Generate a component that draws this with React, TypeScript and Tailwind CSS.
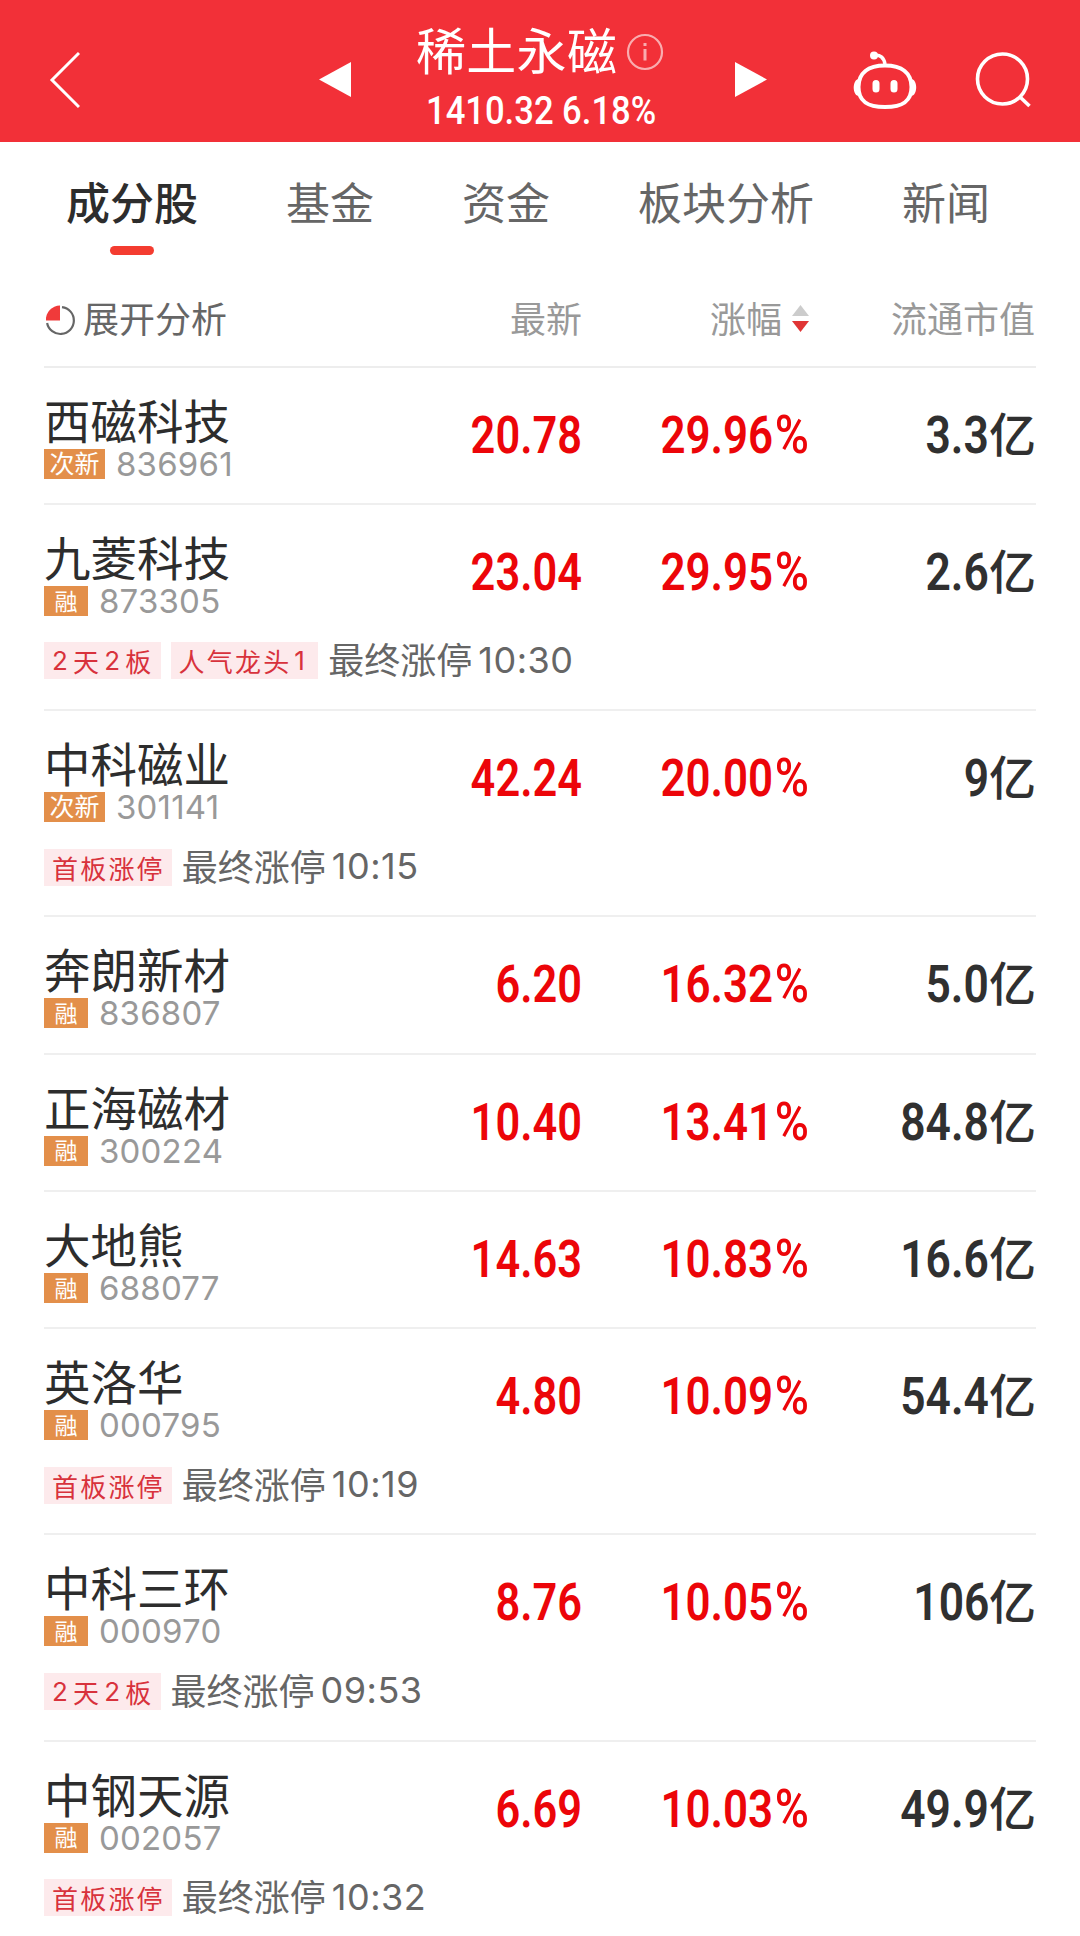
type Stock = {
  name: string;
  code: string;
  badge: string;
  price: string;
  change: string;
  cap: string;
  tags?: string[];
  time?: string;
};

const tabs = ["成分股", "基金", "资金", "板块分析", "新闻"];

const stocks: Stock[] = [
  { name: "西磁科技", code: "836961", badge: "次新", price: "20.78", change: "29.96", cap: "3.3" },
  { name: "九菱科技", code: "873305", badge: "融", price: "23.04", change: "29.95", cap: "2.6", tags: ["2天2板", "人气龙头1"], time: "10:30" },
  { name: "中科磁业", code: "301141", badge: "次新", price: "42.24", change: "20.00", cap: "9", tags: ["首板涨停"], time: "10:15" },
  { name: "奔朗新材", code: "836807", badge: "融", price: "6.20", change: "16.32", cap: "5.0" },
  { name: "正海磁材", code: "300224", badge: "融", price: "10.40", change: "13.41", cap: "84.8" },
  { name: "大地熊", code: "688077", badge: "融", price: "14.63", change: "10.83", cap: "16.6" },
  { name: "英洛华", code: "000795", badge: "融", price: "4.80", change: "10.09", cap: "54.4", tags: ["首板涨停"], time: "10:19" },
  { name: "中科三环", code: "000970", badge: "融", price: "8.76", change: "10.05", cap: "106", tags: ["2天2板"], time: "09:53" },
  { name: "中钢天源", code: "002057", badge: "融", price: "6.69", change: "10.03", cap: "49.9", tags: ["首板涨停"], time: "10:32" }
];

function RobotIcon() {
  return (
    <svg className="h-[60px] w-[66px]" viewBox="0 0 66 60" fill="none" stroke="#fff" strokeWidth="4">
      <path d="M33 15.500C50 15.500 59.500 23 59.500 37S51 57 33 57 6.500 51 6.500 37 16 15.500 33 15.500Z" />
      <path d="M22 5.500C28 4 32 8 33 14" strokeWidth="3.500" />
      <circle cx="22" cy="5.500" r="4" fill="#fff" stroke="none" />
      <path d="M7 29C0 29 0 46 7 46ZM59 29C66 29 66 46 59 46Z" fill="#fff" stroke="none" />
      <path d="M24 33.500V39M42 33.500V39" strokeWidth="7" strokeLinecap="round" />
    </svg>
  );
}

function Header() {
  return (
    <header className="flex h-[142px] items-center bg-[#f23038] text-white">
      <svg className="ml-[48px] mt-[18px] h-[58px] w-[32px]" viewBox="0 0 32 58" fill="none" stroke="#fff" strokeWidth="3">
        <path d="M31 2L4 29L31 56" />
      </svg>
      <svg className="ml-[238px] mt-[17px] h-[36px] w-[34px]" viewBox="0 0 34 36" fill="#fff">
        <path d="M33 0V35L1 17.500Z" />
      </svg>
      <div className="ml-[64px] flex h-full w-[250px] flex-col pt-[16px]">
        <div className="flex items-center">
          <h1 className="w-[204px] whitespace-nowrap text-[50px] font-normal leading-[64px] tracking-[0.3px]">稀土永磁</h1>
          <svg className="ml-[6px] mt-[7px] h-[38px] w-[38px] shrink-0 opacity-60" viewBox="0 0 38 38" fill="none" stroke="#fff" strokeWidth="2.200">
            <circle cx="19" cy="19" r="17" />
            <path d="M19 16V27.500M19 10V13" strokeWidth="3" />
          </svg>
        </div>
        <p className="ml-[10px] mt-[9px] origin-left scale-x-[0.910] whitespace-nowrap font-['Roboto'] text-[38px] font-medium leading-[44px]">
          1410.32 6.18%
        </p>
      </div>
      <svg className="ml-[68px] mt-[17px] h-[36px] w-[34px]" viewBox="0 0 34 36" fill="#fff">
        <path d="M1 0V35L33 17.500Z" />
      </svg>
      <div className="ml-[84px] mt-[18px]">
        <RobotIcon />
      </div>
      <svg className="ml-[57px] mt-[18px] h-[58px] w-[58px]" viewBox="0 0 58 58" fill="none" stroke="#fff" strokeWidth="3.600">
        <circle cx="27.500" cy="28" r="25" />
        <path d="M45 46L54.500 55" />
      </svg>
    </header>
  );
}

function Tabs() {
  return (
    <nav className="flex h-[127px] gap-[88px] pl-[66px] pt-[27px] text-[44px] leading-[64px] text-[#666]">
      {tabs.map((tab, i) => (
        <div key={tab} className="flex flex-col items-center whitespace-nowrap">
          <span className={i === 0 ? "font-medium text-[#2d2d2d]" : ""}>{tab}</span>
          {i === 0 && <span className="mt-[13px] h-[9px] w-[44px] rounded-full bg-[#f43c30]" />}
        </div>
      ))}
    </nav>
  );
}

function TableHead() {
  return (
    <div className="mx-[44px] grid h-[98.600px] grid-cols-[311px_227px_227px_227px] items-center border-b-2 border-[#ededed] text-right text-[36px] leading-[48px] text-[#999]">
      <div className="flex items-center text-[#666]">
        <svg className="mt-[5px] h-[32px] w-[32px]" viewBox="0 0 32 32" fill="none">
          <path d="M18 3.100A13.500 13.500 0 1 1 3.100 19" stroke="#666" strokeWidth="2.200" />
          <path d="M16 1.500V16.500H2A14 14 0 0 1 16 1.500Z" fill="#f03a3a" />
        </svg>
        <span className="ml-[7px]">展开分析</span>
      </div>
      <div>最新</div>
      <div className="flex items-center justify-end">
        <span>涨幅</span>
        <svg className="ml-[10px] mt-[3px] h-[28px] w-[17px]" viewBox="0 0 17 28">
          <path d="M8.500 0L17 11H0Z" fill="#ccc" />
          <path d="M0 16H17L8.500 27Z" fill="#e03535" />
        </svg>
      </div>
      <div className="pr-px">流通市值</div>
    </div>
  );
}

function Tag({ text }: { text: string }) {
  return (
    <span className="mr-[10px] mt-px flex h-[37px] items-center bg-[#fdeaec] pl-[8px] pr-[7px] text-[26px] tracking-[2.200px] text-[#d8323c]">
      {text.split(/(\d)/).filter(Boolean).map((part, i) => (
        <span key={i} className={/\d/.test(part) ? "mr-[3px] font-['Inter'] last:mr-0 last:w-[17px]" : "mr-[3px] last:mr-0"}>
          {part}
        </span>
      ))}
    </span>
  );
}

function StockRow({ stock }: { stock: Stock }) {
  return (
    <li className={`border-b-2 border-[#efefef] ${stock.tags ? "h-[206.100px]" : "h-[137.400px]"}`}>
      <div className="grid h-[136px] grid-cols-[311px_227px_227px_227px] items-center text-right">
        <div className="text-left">
          <div className="-mt-[2px] mb-[2px] text-[46.500px] leading-[56px] text-[#2d2d2d]">{stock.name}</div>
          <div className="flex h-[30px] items-center">
            <span className={`flex h-[30px] items-center justify-center bg-[#e38f4a] pb-[2px] text-white ${stock.badge.length > 1 ? "w-[61px] text-[25px]" : "w-[44px] text-[23px]"}`}>
              {stock.badge}
            </span>
            <span className="ml-[11px] font-['Inter'] text-[33px] leading-[30px] tracking-[0.200px] text-[#999]">{stock.code}</span>
          </div>
        </div>
        <div className="origin-right scale-x-[0.850] font-['Roboto'] text-[51px] font-semibold leading-[60px] text-[#ec0509]">{stock.price}</div>
        <div className="-mt-px origin-right scale-x-[0.860] font-['Roboto'] text-[51px] font-semibold leading-[60px] text-[#ec0509]">
          {stock.change}
          <span className="ml-[2px] text-[54px] font-medium">%</span>
        </div>
        <div className="flex items-center justify-end text-[#303030]">
          <span className="origin-right scale-x-[0.870] font-['Roboto'] text-[51px] font-semibold leading-[60px]">{stock.cap}</span>
          <span className="mb-[8px] text-[47px] font-medium leading-[60px]">亿</span>
        </div>
      </div>
      {stock.tags && (
        <div className="mt-px flex h-[37px] items-center whitespace-nowrap">
          {stock.tags.map((tag) => (
            <Tag key={tag} text={tag} />
          ))}
          <span className="-mt-[3px] text-[36px] leading-[37px] text-[#666]">最终涨停</span>
          <span className="ml-[6px] font-['Inter'] text-[36px] leading-[37px] tracking-[0.500px] text-[#666]">{stock.time}</span>
        </div>
      )}
    </li>
  );
}

export default function App() {
  return (
    <main className="h-[1936px] w-[1080px] overflow-hidden bg-white font-['Noto_Sans_CJK_SC',sans-serif]">
      <Header />
      <Tabs />
      <TableHead />
      <ul className="mx-[44px]">
        {stocks.map((stock) => (
          <StockRow key={stock.code} stock={stock} />
        ))}
      </ul>
    </main>
  );
}
